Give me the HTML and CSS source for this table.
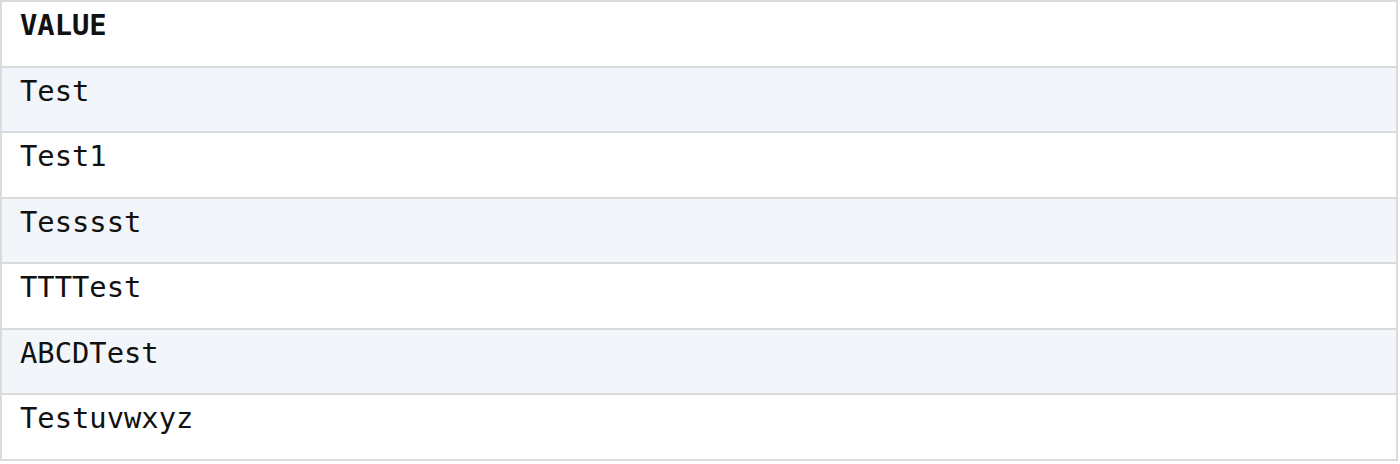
FILE: index.html
```html
<!DOCTYPE html>
<html>
<head>
<meta charset="utf-8">
<link rel="stylesheet" href="styles.css">
</head>
<body>
<table class="grid">
  <thead>
    <tr><th>VALUE</th></tr>
  </thead>
  <tbody>
    <tr><td>Test</td></tr>
    <tr><td>Test1</td></tr>
    <tr><td>Tesssst</td></tr>
    <tr><td>TTTTest</td></tr>
    <tr><td>ABCDTest</td></tr>
    <tr><td>Testuvwxyz</td></tr>
  </tbody>
</table>
</body>
</html>
```
FILE: styles.css
```css
html, body {
  margin: 0;
  padding: 0;
  background: #ffffff;
}
.grid {
  width: 1398px;
  border-collapse: collapse;
  font-family: "DejaVu Sans Mono", monospace;
  font-size: 28.8px;
  color: #111111;
}
.grid th,
.grid td {
  border: 2px solid #dadbdd;
  text-align: left;
  padding: 5px 18px 22px 18px;
  line-height: 36.5px;
  height: 36.5px;
}
.grid th {
  font-weight: bold;
}
.grid tbody tr:nth-child(odd) td {
  background: #f2f5fa;
}
```
